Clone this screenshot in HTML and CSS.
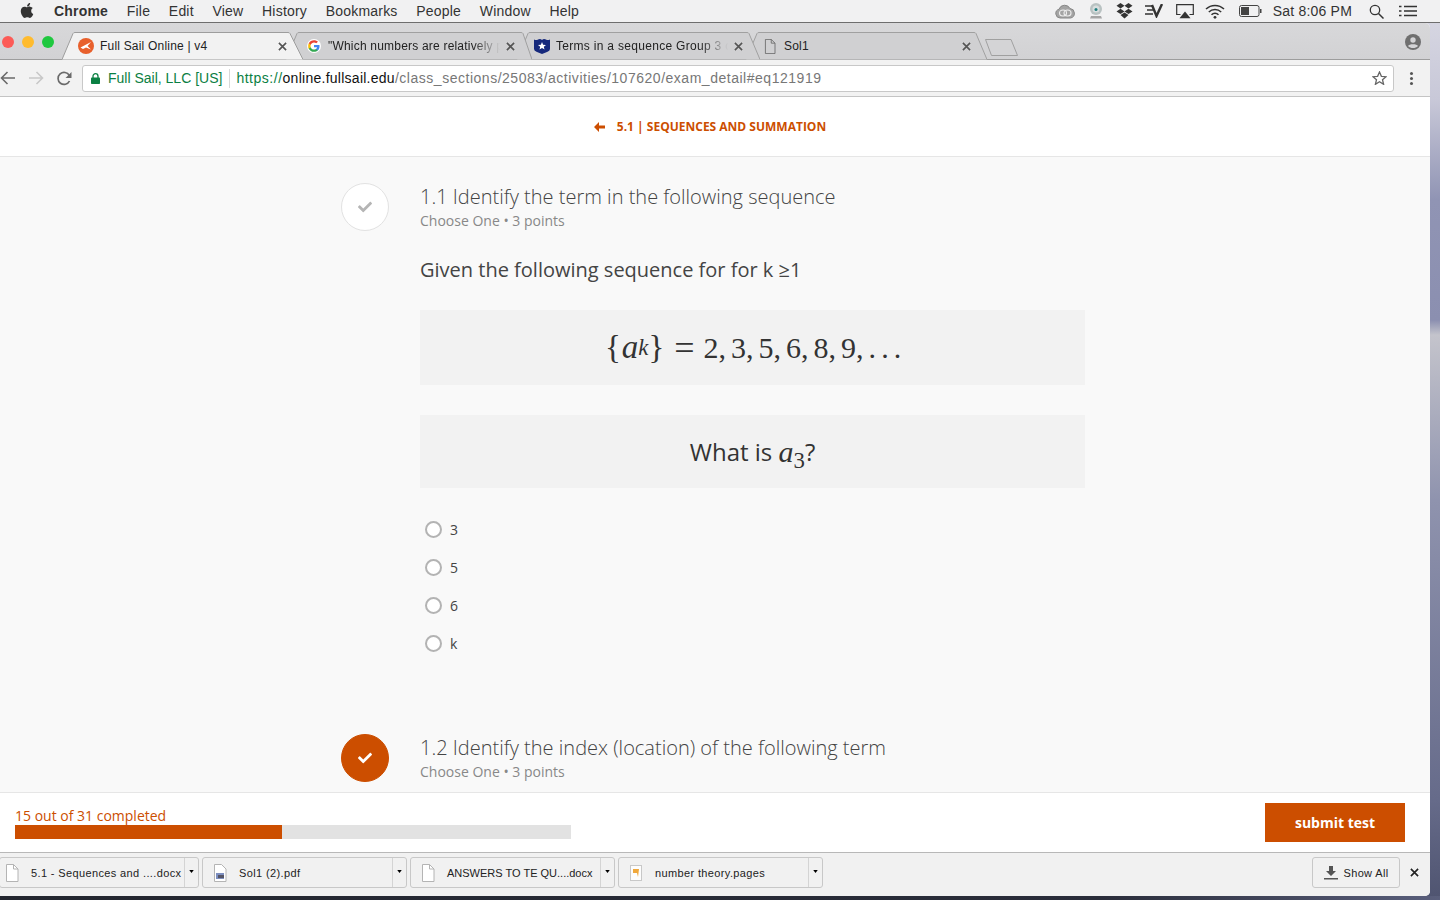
FILE: index.html
```html
<!DOCTYPE html>
<html lang="en">
<head>
  <meta charset="UTF-8">
  <meta name="viewport" content="width=device-width, initial-scale=1.0">
  <title>Full Sail Online | v4</title>
  <link rel="stylesheet" href="styles.css">
</head>
<body>

<!-- Shared icons -->
<svg class="defs" width="0" height="0">
  <symbol id="check" viewBox="0 0 512 512"><path d="M173.898 439.404l-166.4-166.4c-9.997-9.997-9.997-26.206 0-36.204l36.203-36.204c9.997-9.998 26.207-9.998 36.204 0L192 312.69 432.095 72.596c9.997-9.997 26.207-9.997 36.204 0l36.203 36.204c9.997 9.997 9.997 26.206 0 36.204l-294.4 294.401c-9.998 9.997-26.207 9.997-36.204-.001z"/></symbol>
  <symbol id="close" viewBox="0 0 10 10"><path d="M1 1l8 8M9 1l-8 8" fill="none" stroke="currentColor" stroke-width="1.8"/></symbol>
  <symbol id="doc" viewBox="0 0 14 18"><path d="M1.5.5h7l4.5 4.500v12.500h-11.500z" fill="#fff" stroke="#b4b4b4"/><path d="M8.500.5v4.500h4.500" fill="none" stroke="#b4b4b4"/></symbol>
  <symbol id="caret" viewBox="0 0 6 4"><path d="M0 0h6l-3 4z"/></symbol>
</svg>

<!-- Mac menu bar -->
<header class="menubar">
  <svg class="apple" width="14" height="17" viewBox="0 0 384 512"><path d="M318.7 268.7c-.2-36.7 16.4-64.4 50-84.8-18.8-26.9-47.2-41.7-84.7-44.6-35.500-2.800-74.300 20.700-88.500 20.700-15 0-49.400-19.700-76.400-19.700C63.300 141.200 4 184.800 4 273.500q0 39.300 14.400 81.200c12.800 36.700 59 126.700 107.200 125.200 25.200-.6 43-17.900 75.800-17.900 31.800 0 48.300 17.900 76.400 17.900 48.600-.7 90.400-82.500 102.600-119.300-65.200-30.700-61.700-90-61.700-91.900zm-56.600-164.200c27.300-32.400 24.800-61.900 24-72.500-24.100 1.400-52 16.400-67.900 34.900-17.500 19.800-27.800 44.300-25.600 71.900 26.100 2 49.900-11.400 69.500-34.300z"/></svg>
  <nav class="menus">
    <span class="app-name">Chrome</span>
    <span>File</span>
    <span>Edit</span>
    <span>View</span>
    <span>History</span>
    <span>Bookmarks</span>
    <span>People</span>
    <span>Window</span>
    <span>Help</span>
  </nav>
  <div class="status">
    <svg class="st-cc" width="20" height="15" viewBox="0 0 20 15"><path d="M5 14a4.500 4.500 0 0 1-1-8.800A6 6 0 0 1 15 4.500 4.800 4.800 0 0 1 15.500 14z" fill="#a4a4a4" stroke="#888"/><ellipse cx="8" cy="9" rx="3.500" ry="3" fill="none" stroke="#eee" stroke-width="1.200"/><ellipse cx="12.500" cy="9" rx="3.500" ry="3" fill="none" stroke="#eee" stroke-width="1.200"/></svg>
    <svg class="st-cam" width="14" height="18" viewBox="0 0 14 18"><circle cx="7" cy="7" r="6" fill="#b9c2c2"/><circle cx="7" cy="7" r="3.500" fill="#d8dede"/><circle cx="7" cy="7.500" r="1.500" fill="#1f7f80"/><path d="M2 14h10l1 2.500H1z" fill="#a5a5a5"/></svg>
    <svg class="st-drop" width="17" height="16" viewBox="0 0 17 16"><path d="M4.500 0l4 2.700-4 2.700-4-2.700zM12.500 0l4 2.700-4 2.700-4-2.700zM4.500 5.700l4 2.700-4 2.700-4-2.700zM12.500 5.700l4 2.700-4 2.700-4-2.700zM4.500 12l4-2.500 4 2.500-4 3.500z" fill="#333"/></svg>
    <svg class="st-ev" width="18" height="14" viewBox="0 0 18 14"><path d="M0 2h8M2 6h6M0 10h8" stroke="#333" stroke-width="1.500" fill="none"/><path d="M7 1l4.500 11L17 0" stroke="#333" stroke-width="2.400" fill="none"/></svg>
    <svg class="st-air" width="18" height="15" viewBox="0 0 18 15"><path d="M4.500 10.500H.7V.7h16.600v9.800h-3.800" fill="none" stroke="#333" stroke-width="1.200"/><path d="M9 7.500l5.500 6.800h-11z" fill="#333"/></svg>
    <svg class="st-wifi" width="20" height="15" viewBox="0 0 20 15"><path d="M1 5a13 13 0 0 1 18 0M3.800 8a9 9 0 0 1 12.400 0M6.500 10.800a5 5 0 0 1 7 0" fill="none" stroke="#333" stroke-width="1.500"/><circle cx="10" cy="13.300" r="1.400" fill="#333"/></svg>
    <svg class="st-batt" width="23" height="12" viewBox="0 0 23 12"><rect x=".5" y=".5" width="19.500" height="11" rx="2" fill="none" stroke="#444"/><rect x="2" y="2" width="8" height="8" fill="#444"/><rect x="21" y="4" width="1.500" height="4" fill="#444"/></svg>
    <span class="clock">Sat 8:06 PM</span>
    <svg class="st-search" width="15" height="15" viewBox="0 0 15 15"><circle cx="6" cy="6" r="4.700" fill="none" stroke="#333" stroke-width="1.300"/><path d="M9.500 9.500l5 5" stroke="#333" stroke-width="1.500"/></svg>
    <svg class="st-list" width="18" height="12" viewBox="0 0 18 12"><path d="M5 1.500h13M5 6h13M5 10.500h13" stroke="#333" stroke-width="1.500"/><path d="M0 1.500h2.500M0 6h2.500M0 10.500h2.500" stroke="#333" stroke-width="1.500"/></svg>
  </div>
</header>

<div class="desk">
  <div class="window">

    <!-- Tab strip -->
    <div class="tabstrip">
      <div class="traffic">
        <span class="light red"></span>
        <span class="light yellow"></span>
        <span class="light green"></span>
      </div>

      <div class="tab tab-active">
        <svg class="tab-shape" width="241" height="28" viewBox="0 0 241 28"><path d="M0 27.500L11 1.500Q11.500.5 13 .5H226Q227.500.5 228 1.500L241 27.500" fill="#f2f2f2" stroke="#9d9d9d"/></svg>
        <svg class="favicon" width="16" height="16" viewBox="0 0 16 16"><circle cx="8" cy="8" r="8" fill="#e8602c"/><path d="M2.500 9.500L13 4 9.500 8l3.500 3.500-5-2-3 1.500z" fill="#fff"/></svg>
        <span class="tab-title">Full Sail Online | v4</span>
        <svg class="tab-close" width="9" height="9"><use href="#close"/></svg>
      </div>

      <div class="tab tab-two">
        <svg class="tab-shape" width="246" height="28" viewBox="0 0 246 28"><path d="M0 27.500L11 1.500Q11.500.5 13 .5H235Q236.500.5 237 1.500L246 27.500" fill="#d0d0d2" stroke="#a0a0a0"/></svg>
        <svg class="favicon" width="14" height="14" viewBox="0 0 48 48"><circle cx="24" cy="24" r="24" fill="#fff"/><path d="M43 24.500c0-1.400-.1-2.700-.4-4H24v7.800h10.700c-.5 2.500-1.900 4.600-4 6v5h6.500c3.700-3.500 5.800-8.700 5.800-14.800z" fill="#4285f4"/><path d="M24 44c5.400 0 9.900-1.800 13.200-4.700l-6.500-5c-1.800 1.200-4 1.900-6.700 1.900-5.200 0-9.600-3.500-11.200-8.200H6.100v5.200C9.400 39.700 16.200 44 24 44z" fill="#34a853"/><path d="M12.800 28c-.4-1.200-.6-2.600-.6-4s.2-2.800.6-4v-5.200H6.100C4.800 17.400 4 20.600 4 24s.8 6.600 2.100 9.200z" fill="#fbbc05"/><path d="M24 11.800c2.900 0 5.600 1 7.700 3l5.700-5.700C33.900 5.900 29.400 4 24 4 16.200 4 9.400 8.300 6.100 14.800l6.700 5.200c1.600-4.700 6-8.200 11.200-8.200z" fill="#ea4335"/></svg>
        <span class="tab-title tab-fade">"Which numbers are relatively prime to</span>
        <svg class="tab-close" width="9" height="9"><use href="#close"/></svg>
      </div>

      <div class="tab tab-three">
        <svg class="tab-shape" width="243" height="28" viewBox="0 0 243 28"><path d="M0 27.500L11 1.500Q11.500.5 13 .5H230Q231.500.5 232 1.500L243 27.500" fill="#d0d0d2" stroke="#a0a0a0"/></svg>
        <svg class="favicon" width="16" height="16" viewBox="0 0 16 16"><path d="M0 1.500q2.500 1 4 0 2.500-1 4 .5 1.500-1.500 4-.5 1.500 1 4 0V11q0 2-3 3l-5 2-5-2q-3-1-3-3z" fill="#16297c"/><path d="M8 4l1.100 2.700 2.900.2-2.200 1.900.7 2.800L8 10.100l-2.500 1.500.7-2.800L4 6.900l2.900-.2z" fill="#fff"/></svg>
        <span class="tab-title tab-fade">Terms in a sequence Group 3 of the</span>
        <svg class="tab-close" width="9" height="9"><use href="#close"/></svg>
      </div>

      <div class="tab tab-four">
        <svg class="tab-shape" width="241" height="28" viewBox="0 0 241 28"><path d="M0 27.500L11 1.500Q11.500.5 13 .5H228Q229.500.5 230 1.500L241 27.500" fill="#d0d0d2" stroke="#a0a0a0"/></svg>
        <svg class="favicon" width="12" height="15" viewBox="0 0 14 18"><path d="M1.500.5h7l4.500 4.500v12.500h-11.500z" fill="none" stroke="#666"/><path d="M8.500.5v4.500h4.500" fill="none" stroke="#666"/></svg>
        <span class="tab-title">Sol1</span>
        <svg class="tab-close" width="9" height="9"><use href="#close"/></svg>
      </div>

      <svg class="new-tab" width="33" height="17" viewBox="0 0 33 17"><path d="M.5.500H26L32.500 16.500H6.500z" fill="#d4d4d6" stroke="#a0a0a0"/></svg>

      <svg class="profile" width="16" height="16" viewBox="0 0 16 16"><circle cx="8" cy="8" r="8" fill="#6f6f6f"/><circle cx="8" cy="6" r="2.700" fill="#d4d4d6"/><path d="M3 12c1-2.500 9-2.500 10 0-1.500 1.500-3 2-5 2s-3.500-.5-5-2z" fill="#d4d4d6"/></svg>
    </div>

    <!-- Toolbar -->
    <div class="toolbar">
      <svg class="nav-back" width="16" height="14" viewBox="0 0 16 14"><path d="M15 7H2M7.500 1L1.500 7l6 6" fill="none" stroke="#6a6a6a" stroke-width="1.600"/></svg>
      <svg class="nav-fwd" width="16" height="14" viewBox="0 0 16 14"><path d="M1 7h13M8.500 1l6 6-6 6" fill="none" stroke="#c8c8c8" stroke-width="1.600"/></svg>
      <svg class="nav-reload" width="15" height="15" viewBox="0 0 15 15"><path d="M12.500 10a6 6 0 1 1-.2-5.500" fill="none" stroke="#6a6a6a" stroke-width="1.700"/><path d="M14.500 1v6h-6z" fill="#6a6a6a"/></svg>
      <div class="omnibox">
        <svg class="lock" width="9" height="11" viewBox="0 0 9 11"><path d="M2 5V3.200a2.500 2.500 0 0 1 5 0V5" fill="none" stroke="#0b8043" stroke-width="1.300"/><rect y="4.500" width="9" height="6.500" rx=".8" fill="#0b8043"/></svg>
        <span class="secure-name">Full Sail, LLC [US]</span>
        <span class="omni-divider"></span>
        <span class="url"><span class="url-scheme">https://</span><span class="url-host">online.fullsail.edu</span>/class_sections/25083/activities/107620/exam_detail#eq121919</span>
        <svg class="star" width="15" height="14" viewBox="0 0 15 14"><path d="M7.500 1l1.900 4.300 4.600.4-3.500 3 1.100 4.600-4.100-2.500-4.100 2.500 1.100-4.600-3.500-3 4.600-.4z" fill="none" stroke="#666" stroke-width="1.300"/></svg>
      </div>
      <div class="kebab"><span></span><span></span><span></span></div>
    </div>

    <!-- Activity header -->
    <div class="activity-head">
      <svg class="back-arrow" width="12" height="10" viewBox="0 0 12 10"><path d="M5 0L0 5l5 5V6.500h6v-3H5z" fill="#cc4e00"/></svg>
      <span>5.1 | SEQUENCES AND SUMMATION</span>
    </div>

    <!-- Questions -->
    <main class="exam">
      <section class="question">
        <div class="q-head">
          <div class="q-mark"><svg width="14" height="14"><use href="#check"/></svg></div>
          <div>
            <div class="q-title">1.1 Identify the term in the following sequence</div>
            <div class="q-sub">Choose One • 3 points</div>
          </div>
        </div>
        <div class="q-body">
          <p class="q-text">Given the following sequence for for k ≥1</p>
          <div class="math-box math-seq">
            <span class="m-brace">{</span><i class="m-a">a</i><sub><i>k</i></sub><span class="m-brace">}</span><span class="m-eq">=</span>2,<span class="m-gap"></span>3,<span class="m-gap"></span>5,<span class="m-gap"></span>6,<span class="m-gap"></span>8,<span class="m-gap"></span>9,<span class="m-dots">. . .</span>
          </div>
          <div class="math-box math-ask">What is&nbsp;<span class="m-inline"><i>a</i><sub>3</sub></span>?</div>
          <ul class="choices">
            <li><span class="radio"></span>3</li>
            <li><span class="radio"></span>5</li>
            <li><span class="radio"></span>6</li>
            <li><span class="radio"></span>k</li>
          </ul>
        </div>
      </section>

      <section class="question">
        <div class="q-head">
          <div class="q-mark done"><svg width="14" height="14"><use href="#check"/></svg></div>
          <div>
            <div class="q-title">1.2 Identify the index (location) of the following term</div>
            <div class="q-sub">Choose One • 3 points</div>
          </div>
        </div>
      </section>
    </main>

    <!-- Progress footer -->
    <footer class="progress-foot">
      <div class="progress">
        <div class="progress-label">15 out of 31 completed</div>
        <div class="progress-track"><div class="progress-fill" style="width: 48%"></div></div>
      </div>
      <button class="submit-btn">submit test</button>
    </footer>

    <!-- Downloads bar -->
    <div class="downloads">
      <div class="dl-item dl-first">
        <svg class="dl-icon" width="14" height="18"><use href="#doc"/></svg>
        <span class="dl-name">5.1 - Sequences and ....docx</span>
        <span class="dl-more"><svg width="5" height="3"><use href="#caret"/></svg></span>
      </div>
      <div class="dl-item">
        <svg class="dl-icon" width="14" height="18" viewBox="0 0 14 18"><path d="M1.500.5h7l4.500 4.500v12.500h-11.500z" fill="#fff" stroke="#b4b4b4"/><rect x="3" y="9" width="8" height="6" fill="#7d8fc0"/><rect x="5" y="11" width="6" height="3" fill="#556"/></svg>
        <span class="dl-name">Sol1 (2).pdf</span>
        <span class="dl-more"><svg width="5" height="3"><use href="#caret"/></svg></span>
      </div>
      <div class="dl-item">
        <svg class="dl-icon" width="14" height="18"><use href="#doc"/></svg>
        <span class="dl-name dl-caps">ANSWERS TO TE QU....docx</span>
        <span class="dl-more"><svg width="5" height="3"><use href="#caret"/></svg></span>
      </div>
      <div class="dl-item">
        <svg class="dl-icon" width="12" height="16" viewBox="0 0 12 16"><rect x=".5" y=".5" width="11" height="15" fill="#fdfdfd" stroke="#c8c8c8"/><path d="M3 4h6l-1 8-1-4H3z" fill="#f0a83c"/></svg>
        <span class="dl-name">number theory.pages</span>
        <span class="dl-more"><svg width="5" height="3"><use href="#caret"/></svg></span>
      </div>
      <button class="show-all">
        <svg width="14" height="14" viewBox="0 0 14 14"><path d="M5 0h4v5h3L7 10 2 5h3z" fill="#555"/><rect y="12" width="14" height="1.500" fill="#555"/></svg>
        Show All
      </button>
      <svg class="dl-close" width="9" height="9"><use href="#close"/></svg>
    </div>
  </div>
</div>

</body>
</html>
```

FILE: styles.css
```css
/* Global */
html, body {
  margin: 0;
  height: 100%;
}

body {
  width: 1440px;
  height: 900px;
  overflow: hidden;
  display: flex;
  flex-direction: column;
  font-family: "Open Sans", sans-serif;
  color: #444;
  background: linear-gradient(180deg, #d9d9e4 0, #c8c8d8 100px, #9094b4 200px, #8b8fb0 320px, #c4c4cc 335px, #8f93ae 500px, #666b8a 800px, #4f5470 900px);
}

.defs {
  display: block;
  height: 0;
}

/* Menu bar */
.menubar {
  height: 22px;
  flex: none;
  display: flex;
  align-items: center;
  background: #f1f1f2;
  border-bottom: 1px solid #6e6e6e;
  font-family: "Liberation Sans", sans-serif;
  font-size: 14px;
  letter-spacing: 0.2px;
  color: #333;
}

.apple {
  margin: -2px 0 0 20px;
  fill: #333;
}

.menus {
  display: flex;
  gap: 18.7px;
  margin-left: 20px;
}

.app-name {
  font-weight: bold;
}

.status {
  margin-left: auto;
  display: flex;
  align-items: center;
  height: 22px;
}

.st-cc { margin-right: 14px; }
.st-cam { margin-right: 13px; }
.st-drop { margin-right: 12px; }
.st-ev { margin-right: 13px; }
.st-air { margin-right: 11px; }
.st-wifi { margin-right: 14px; }
.st-batt { margin-right: 11px; }
.clock { margin-right: 17px; }
.st-search { margin-right: 15px; }
.st-list { margin-right: 23px; }

/* Browser window */
.desk {
  flex: 1;
  min-height: 0;
  padding-bottom: 4px;
  background: linear-gradient(90deg, #23262f 0, #2a2d3a 1100px, #5a5f7c 1440px) bottom / 100% 4px no-repeat;
}

.window {
  width: 1430px;
  height: 100%;
  display: flex;
  flex-direction: column;
  border-radius: 0 5px 5px 0;
  overflow: hidden;
  background: #fff;
  font-family: "Liberation Sans", sans-serif;
}

/* Tabs */
.tabstrip {
  height: 37px;
  flex: none;
  box-sizing: border-box;
  display: flex;
  align-items: flex-end;
  position: relative;
  background: linear-gradient(180deg, #d8d8da, #d2d2d4);
  border-bottom: 1px solid #9d9d9d;
}

.traffic {
  width: 62px;
  height: 36px;
  flex: none;
  box-sizing: border-box;
  padding: 13px 0 0 2px;
  display: flex;
  gap: 8px;
}

.light {
  width: 12px;
  height: 12px;
  border-radius: 50%;
}

.red { background: #fc5b57; }
.yellow { background: #ffbb2e; }
.green { background: #1fc83f; }

.tab {
  height: 28px;
  box-sizing: border-box;
  display: flex;
  align-items: center;
  position: relative;
  margin-bottom: -1px;
  font-size: 12px;
  letter-spacing: 0.2px;
  color: #222;
}

.tab-shape {
  position: absolute;
  left: 0;
  top: 0;
}

.tab > :not(.tab-shape) {
  position: relative;
}

.tab-active { width: 241px; padding: 0 16px; z-index: 4; }
.tab-two { width: 246px; margin-left: -17px; padding: 0 17px 0 21px; z-index: 3; }
.tab-three { width: 243px; margin-left: -15px; padding: 0 17px 0 17px; z-index: 2; letter-spacing: 0.3px; }
.tab-four { width: 241px; margin-left: -14px; padding: 0 16px 0 18px; z-index: 1; }

.favicon {
  flex: none;
  margin-right: 6px;
}

.tab-two .favicon { margin-right: 7px; }
.tab-four .favicon { margin-right: 8px; }

.tab-title {
  flex: 1;
  white-space: nowrap;
  overflow: hidden;
}

.tab-fade {
  -webkit-mask-image: linear-gradient(90deg, #000 84%, transparent 100%);
  mask-image: linear-gradient(90deg, #000 84%, transparent 100%);
  margin-right: 6px;
}

.tab-close {
  flex: none;
  color: #555;
}

.new-tab {
  margin: 0 0 3px -2px;
}

.profile {
  position: absolute;
  right: 9px;
  top: 11px;
}

/* Toolbar */
.toolbar {
  height: 37px;
  flex: none;
  box-sizing: border-box;
  display: flex;
  align-items: center;
  background: #f2f2f2;
  border-bottom: 1px solid #c4c4c4;
}

.nav-back { margin-left: 0; }
.nav-fwd { margin-left: 12px; }
.nav-reload { margin-left: 13px; }

.omnibox {
  width: 1312px;
  height: 27px;
  margin-left: 10px;
  box-sizing: border-box;
  display: flex;
  align-items: center;
  background: #fff;
  border: 1px solid #c8c8c8;
  border-radius: 3px;
  font-size: 14px;
  padding-left: 8px;
}

.lock { margin-right: 8px; }
.secure-name { color: #0b8043; }

.omni-divider {
  width: 1px;
  height: 19px;
  margin: 0 6px 0 7px;
  background: #d8d8d8;
}

.url {
  flex: 1;
  color: #777;
  white-space: nowrap;
  letter-spacing: 0.52px;
}

.url-scheme { color: #0b8043; }
.url-host { color: #111; letter-spacing: 0.26px; }

.star { margin-right: 6px; }

.kebab {
  margin-left: 16px;
  display: flex;
  flex-direction: column;
  gap: 2px;
}

.kebab span {
  width: 3px;
  height: 3px;
  border-radius: 50%;
  background: #555;
}

/* Activity header */
.activity-head {
  height: 60px;
  flex: none;
  box-sizing: border-box;
  display: flex;
  align-items: center;
  justify-content: center;
  gap: 11px;
  padding-right: 10px;
  background: #fff;
  border-bottom: 1px solid #e6e6e6;
  font-family: "Open Sans", sans-serif;
  font-size: 12px;
  font-weight: 700;
  color: #cc4e00;
}

/* Questions */
.exam {
  flex: 1;
  min-height: 0;
  overflow: hidden;
  box-sizing: border-box;
  padding: 26px 0 0 341px;
  background: #f9f9f9;
  font-family: "Open Sans", sans-serif;
}

.question {
  width: 744px;
  margin-bottom: 72px;
}

.q-head {
  display: flex;
  gap: 31px;
}

.q-mark {
  width: 48px;
  height: 48px;
  flex: none;
  box-sizing: border-box;
  display: flex;
  align-items: center;
  justify-content: center;
  background: #fff;
  border: 1px solid #e2e2e2;
  border-radius: 50%;
  fill: #b5b5b5;
}

.q-mark.done {
  background: #cc4e00;
  border-color: #cc4e00;
  fill: #fff;
}

.q-title {
  font-size: 20px;
  line-height: 28px;
  font-weight: 300;
  color: #444;
}

.q-sub {
  font-size: 14px;
  line-height: 20px;
  color: #888;
}

.q-body {
  margin-left: 79px;
}

.q-text {
  margin: 26px 0 27px;
  font-size: 20px;
  line-height: 26px;
  color: #444;
}

.math-box {
  display: flex;
  align-items: center;
  justify-content: center;
  background: #f2f2f2;
  white-space: pre;
  color: #333;
}

.math-seq {
  height: 75px;
  margin-bottom: 30px;
  font-family: "Liberation Serif", serif;
  font-size: 30px;
}

.math-ask {
  height: 73px;
  font-size: 24px;
}

.math-box sub {
  font-size: 0.76em;
  line-height: 0;
  vertical-align: -0.25em;
}

.m-inline {
  font-family: "Liberation Serif", serif;
  font-size: 30px;
}

.m-a { font-size: 33px; margin-left: 1px; }
.m-brace { font-size: 33px; }
.m-eq { margin: 0 9px 0 10px; font-size: 36px; line-height: 30px; }
.m-gap { width: 5px; }
.m-dots { margin-left: 5px; letter-spacing: -1.2px; }

.choices {
  list-style: none;
  margin: 22px 0 0;
  padding: 0 0 0 5px;
}

.choices li {
  height: 38px;
  display: flex;
  align-items: center;
  gap: 8px;
  font-size: 14px;
}

.radio {
  width: 17px;
  height: 17px;
  box-sizing: border-box;
  background: #fff;
  border: 2px solid #b3b3b3;
  border-radius: 50%;
}

/* Progress footer */
.progress-foot {
  height: 60px;
  flex: none;
  box-sizing: border-box;
  display: flex;
  align-items: flex-start;
  justify-content: space-between;
  padding: 0 25px 0 15px;
  background: #fff;
  border-top: 1px solid #e6e6e6;
  font-family: "Open Sans", sans-serif;
}

.progress {
  width: 556px;
  padding-top: 14px;
}

.progress-label {
  font-size: 14px;
  line-height: 18px;
  color: #cc4e00;
}

.progress-track {
  height: 14px;
  background: #e2e2e2;
}

.progress-fill {
  height: 100%;
  background: #cc4e00;
}

.submit-btn {
  width: 140px;
  height: 39px;
  margin-top: 10px;
  border: none;
  background: #cc4e00;
  color: #fff;
  font-family: inherit;
  font-size: 14px;
  font-weight: 700;
}

/* Downloads bar */
.downloads {
  height: 44px;
  flex: none;
  box-sizing: border-box;
  padding-top: 4px;
  display: flex;
  align-items: flex-start;
  gap: 3px;
  background: #f1f1f1;
  border-top: 1px solid #b8b8b8;
  font-size: 11px;
  color: #222;
  letter-spacing: 0.37px;
}

.dl-item {
  width: 205px;
  height: 31px;
  box-sizing: border-box;
  display: flex;
  align-items: center;
  border: 1px solid #c8c8c8;
  border-radius: 3px;
  padding-left: 10px;
}

.dl-first {
  width: 200px;
  margin-left: -1px;
  padding-left: 5px;
}

.dl-icon {
  flex: none;
  width: 14px;
  margin-right: 12px;
}

.dl-name {
  flex: 1;
  white-space: nowrap;
}

.dl-caps {
  letter-spacing: 0;
}

.dl-more {
  width: 14px;
  height: 29px;
  flex: none;
  display: flex;
  align-items: center;
  justify-content: center;
  border-left: 1px solid #d4d4d4;
  padding-bottom: 3px;
  box-sizing: border-box;
}

.show-all {
  width: 88px;
  height: 31px;
  margin-left: auto;
  display: flex;
  align-items: center;
  justify-content: center;
  gap: 6px;
  background: transparent;
  border: 1px solid #c8c8c8;
  border-radius: 3px;
  font-family: inherit;
  font-size: 11px;
  letter-spacing: 0.35px;
  color: #222;
}

.dl-close {
  margin: 11px 11px 0 7px;
  color: #222;
}
```
